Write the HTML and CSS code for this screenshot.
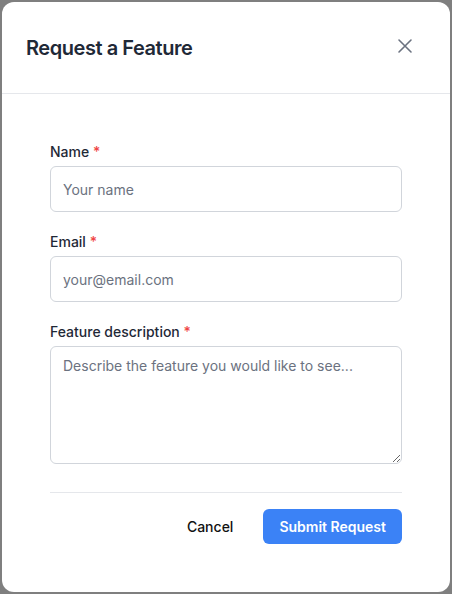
FILE: index.html
```html
<!DOCTYPE html>
<html lang="en">
<head>
<meta charset="utf-8">
<title>Request a Feature</title>
<link rel="stylesheet" href="styles.css">
</head>
<body>
<div class="backdrop">
  <div class="modal" role="dialog" aria-labelledby="modal-title">
    <div class="modal-header">
      <h2 class="modal-title" id="modal-title">Request a Feature</h2>
      <button class="close-btn" type="button" aria-label="Close">
        <svg width="24" height="24" viewBox="0 0 24 24" fill="none" stroke="currentColor" stroke-width="1.6" stroke-linecap="round" stroke-linejoin="round"><path d="M6 18L18 6M6 6l12 12"/></svg>
      </button>
    </div>
    <form class="modal-body">
      <div class="field">
        <label class="label" for="name">Name <span class="req">*</span></label>
        <input class="input" id="name" type="text" placeholder="Your name">
      </div>
      <div class="field">
        <label class="label" for="email">Email <span class="req">*</span></label>
        <input class="input" id="email" type="email" placeholder="your@email.com">
      </div>
      <div class="field">
        <label class="label" for="desc">Feature description <span class="req">*</span></label>
        <textarea class="input textarea" id="desc" placeholder="Describe the feature you would like to see..."></textarea>
      </div>
      <div class="footer">
        <button class="btn btn-cancel" type="button">Cancel</button>
        <button class="btn btn-primary" type="submit">Submit Request</button>
      </div>
    </form>
  </div>
</div>
</body>
</html>
```
FILE: styles.css
```css
* { box-sizing: border-box; }
html, body {
  margin: 0;
  padding: 0;
  height: 100%;
}
body {
  font-family: Inter, "Noto Sans", "Liberation Sans", sans-serif;
  background: #7f7f7f;
  color: #1f2937;
}
.backdrop {
  min-height: 100%;
  padding: 2px;
  display: flex;
  justify-content: center;
}
.modal {
  width: 448px;
  height: 590px;
  background: #ffffff;
  border-radius: 12px;
  display: flex;
  flex-direction: column;
}
.modal-header {
  display: flex;
  align-items: center;
  justify-content: space-between;
  padding: 32px 33px 31px 24px;
  border-bottom: 1px solid #e5e7eb;
}
.modal-title {
  margin: 0;
  font-size: 20px;
  line-height: 28px;
  font-weight: 600;
  color: #1f2937;
  letter-spacing: -0.45px;
}
.close-btn {
  width: 24px;
  height: 24px;
  padding: 0;
  margin-bottom: 4px;
  border: 0;
  background: none;
  color: #6b7280;
  display: flex;
  align-items: center;
  justify-content: center;
  cursor: pointer;
}
.modal-body {
  padding: 48px 48px 48px;
  display: flex;
  flex-direction: column;
  gap: 20px;
}
.field {
  display: flex;
  flex-direction: column;
  gap: 4px;
}
.label {
  font-size: 14px;
  line-height: 20px;
  font-weight: 500;
  color: #1f2937;
}
.req {
  color: #ef4444;
}
.input {
  width: 100%;
  height: 46px;
  padding: 12px 12px;
  border: 1px solid #d1d5db;
  border-radius: 6px;
  font-family: inherit;
  font-size: 14px;
  line-height: 20px;
  color: #111827;
  background: #fff;
  outline: none;
}
.input::placeholder {
  color: #6b7280;
}
.textarea {
  height: 118px;
  padding: 9px 12px;
  resize: vertical;
  display: block;
}
.footer {
  margin-top: 8px;
  border-top: 1px solid #e5e7eb;
  padding-top: 16px;
  display: flex;
  justify-content: flex-end;
  align-items: center;
  gap: 12px;
}
.btn {
  font-family: inherit;
  font-size: 14px;
  line-height: 20px;
  font-weight: 600;
  border: 0;
  border-radius: 6px;
  height: 35px;
  cursor: pointer;
}
.btn-cancel {
  background: transparent;
  color: #111111;
  font-weight: 500;
  padding: 0 18px;
}
.btn-primary {
  background: #3b82f6;
  color: #ffffff;
  padding: 0 16px;
}
```
